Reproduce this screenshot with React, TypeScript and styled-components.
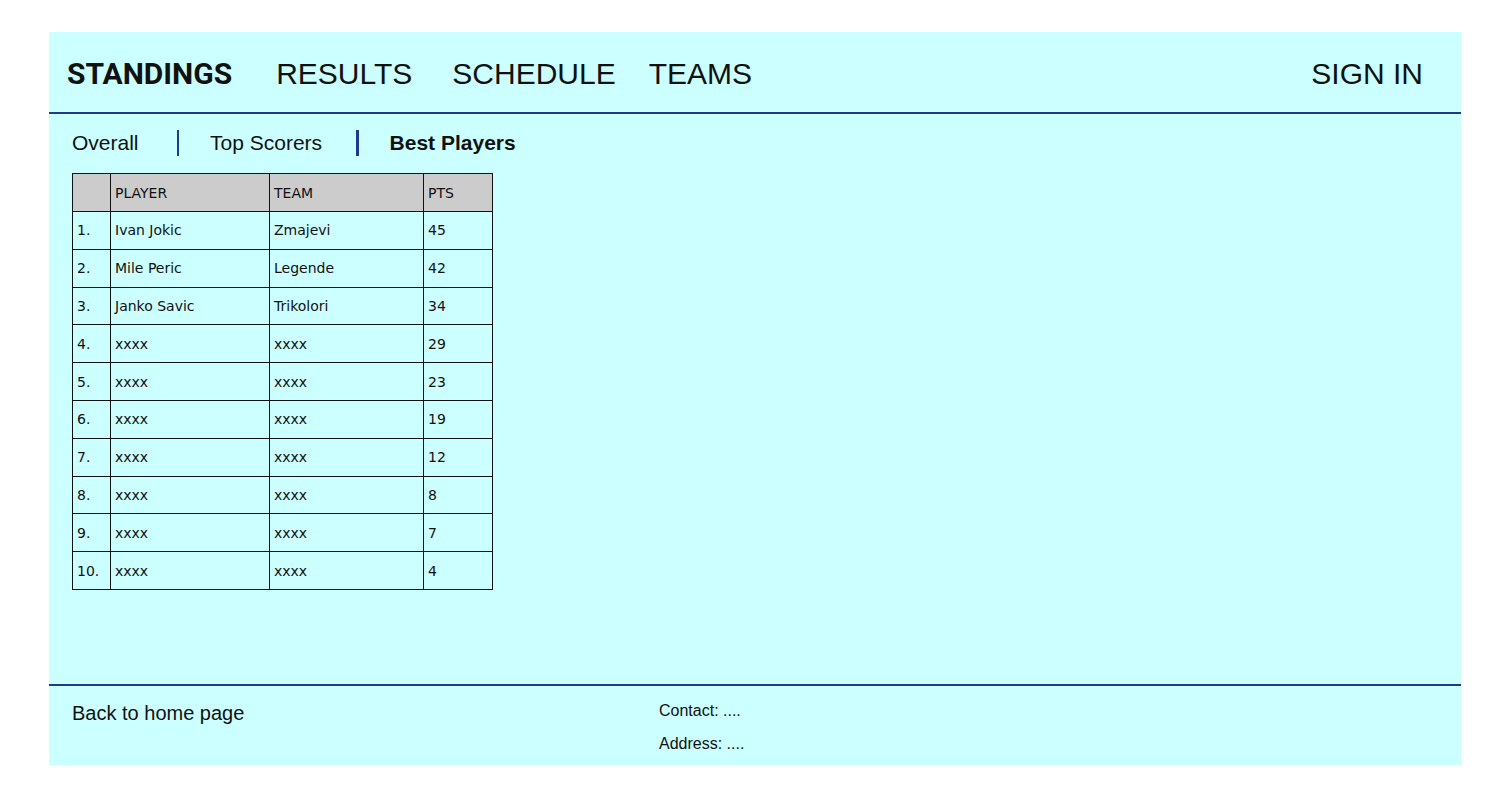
import React from "react";
import styled, { createGlobalStyle } from "styled-components";

const Global = createGlobalStyle`
  html, body { margin: 0; padding: 0; background: #fff; }
  body { font-family: "Liberation Sans", Arial, sans-serif; color: #111; }
`;

const Page = styled.div`
  padding: 32px 39px 35px 49px;
`;

const Panel = styled.div`
  width: 1412px;
  height: 733px;
  background: #ccffff;
  display: flex;
  flex-direction: column;
`;

const Header = styled.header`
  height: 82px;
  flex: none;
  display: flex;
  align-items: center;
  padding: 4px 38px 0 18px;
  box-sizing: border-box;
  border-bottom: 2px solid #1f3a8c;
`;

const NavItem = styled.a<{ $bold?: boolean; $ml?: number }>`
  font-family: ${(p) => (p.$bold ? "Roboto, sans-serif" : '"Liberation Sans", Arial, sans-serif')};
  font-weight: ${(p) => (p.$bold ? 700 : 400)};
  font-size: 30px;
  color: #111;
  margin-left: ${(p) => p.$ml ?? 0}px;
  cursor: pointer;
  line-height: 1;
`;

const Spacer = styled.div`
  flex: 1;
`;

const Main = styled.main`
  flex: 1;
  padding: 15px 23px 0 23px;
  display: flex;
  flex-direction: column;
  align-items: flex-start;
`;

const SubNav = styled.nav`
  display: flex;
  align-items: center;
  height: 28px;
`;

const SubItem = styled.a<{ $bold?: boolean }>`
  font-size: 21px;
  font-weight: ${(p) => (p.$bold ? 700 : 400)};
  color: #111;
  cursor: pointer;
`;

const Sep = styled.span<{ $l: number; $r: number }>`
  width: 2.5px;
  height: 26px;
  background: #1f3a8c;
  margin: 0 ${(p) => p.$r}px 0 ${(p) => p.$l}px;
`;

const Table = styled.table`
  margin-top: 16px;
  border-collapse: collapse;
  border: 1.5px solid #111;
  font-family: "DejaVu Sans", sans-serif;
  font-size: 14px;
  color: #111;
`;

const Th = styled.th<{ $w: number }>`
  width: ${(p) => p.$w}px;
  height: 38px;
  background: #cccccc;
  border: 1.2px solid #111;
  text-align: left;
  font-weight: 400;
  padding: 0 0 0 4px;
  box-sizing: border-box;
`;

const Td = styled.td`
  height: 37.8px;
  border: 1.2px solid #111;
  padding: 0 0 0 4px;
  box-sizing: border-box;
`;

const Footer = styled.footer`
  height: 81px;
  flex: none;
  border-top: 2px solid #1f3a8c;
  display: flex;
  padding: 0 0 0 23px;
  box-sizing: border-box;
`;

const BackLink = styled.a`
  font-size: 20px;
  color: #111;
  margin-top: 16px;
  width: 587px;
  cursor: pointer;
`;

const Contact = styled.div`
  display: flex;
  flex-direction: column;
  gap: 15px;
  padding-top: 16px;
  font-size: 16px;
  color: #111;
`;

const rows: [string, string, string, string][] = [
  ["1.", "Ivan Jokic", "Zmajevi", "45"],
  ["2.", "Mile Peric", "Legende", "42"],
  ["3.", "Janko Savic", "Trikolori", "34"],
  ["4.", "xxxx", "xxxx", "29"],
  ["5.", "xxxx", "xxxx", "23"],
  ["6.", "xxxx", "xxxx", "19"],
  ["7.", "xxxx", "xxxx", "12"],
  ["8.", "xxxx", "xxxx", "8"],
  ["9.", "xxxx", "xxxx", "7"],
  ["10.", "xxxx", "xxxx", "4"],
];

export default function App() {
  return (
    <Page>
      <Global />
      <Panel>
        <Header>
          <NavItem $bold>STANDINGS</NavItem>
          <NavItem $ml={44}>RESULTS</NavItem>
          <NavItem $ml={40}>SCHEDULE</NavItem>
          <NavItem $ml={33}>TEAMS</NavItem>
          <Spacer />
          <NavItem>SIGN IN</NavItem>
        </Header>
        <Main>
          <SubNav>
            <SubItem>Overall</SubItem>
            <Sep $l={38} $r={31} />
            <SubItem>Top Scorers</SubItem>
            <Sep $l={34} $r={31} />
            <SubItem $bold>Best Players</SubItem>
          </SubNav>
          <Table>
            <thead>
              <tr>
                <Th $w={38}></Th>
                <Th $w={159}>PLAYER</Th>
                <Th $w={154}>TEAM</Th>
                <Th $w={69}>PTS</Th>
              </tr>
            </thead>
            <tbody>
              {rows.map((r) => (
                <tr key={r[0]}>
                  {r.map((c, i) => (
                    <Td key={i}>{c}</Td>
                  ))}
                </tr>
              ))}
            </tbody>
          </Table>
        </Main>
        <Footer>
          <BackLink>Back to home page</BackLink>
          <Contact>
            <span>Contact: ....</span>
            <span>Address: ....</span>
          </Contact>
        </Footer>
      </Panel>
    </Page>
  );
}
